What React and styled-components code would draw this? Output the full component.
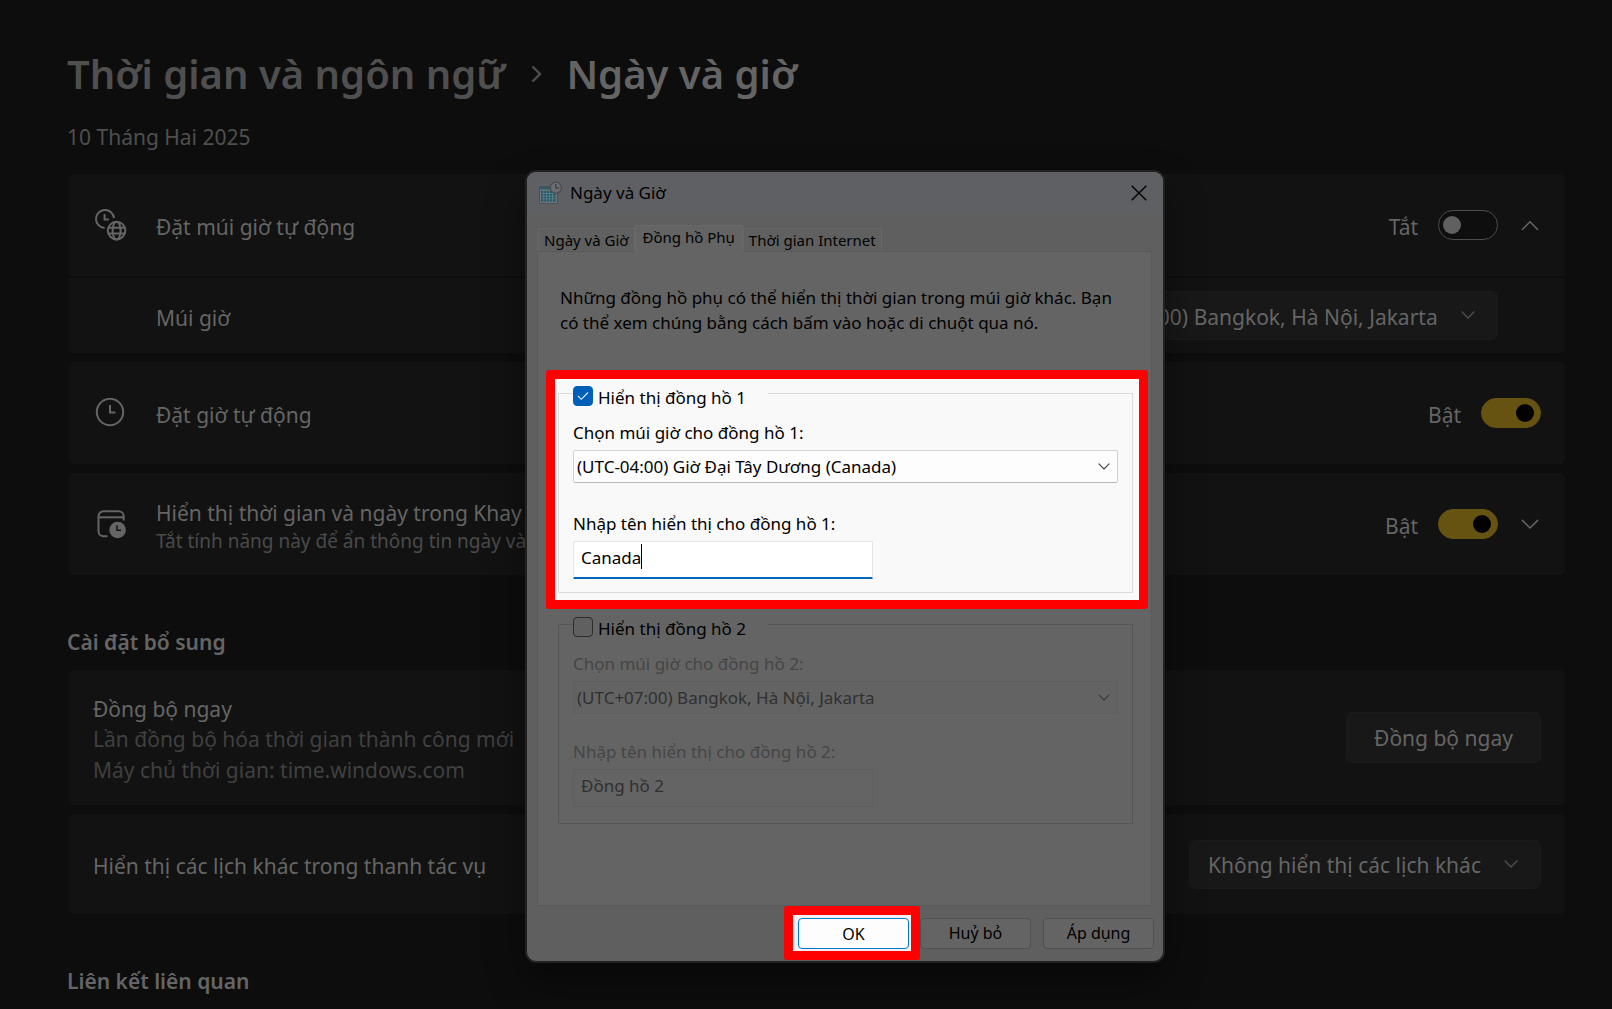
import React from 'react';
import styled, { createGlobalStyle, css } from 'styled-components';

const GlobalStyle = createGlobalStyle`
  *, *::before, *::after { box-sizing: border-box; }
  body {
    margin: 0;
    background: #0d0d0d;
    font-family: "Noto Sans", "Open Sans", sans-serif;
  }
  button, input, select { font: inherit; margin: 0; }
`;

/* ---------- Settings page ---------- */

const Desktop = styled.div`
  position: relative;
  min-height: 100vh;
  overflow: hidden;
`;

const Page = styled.main`
  display: flex;
  flex-direction: column;
  padding: 46px 47px 0 67px;
  color: #656565;
  font-size: 21px;
  line-height: 30px;
  white-space: nowrap;
`;

const Breadcrumb = styled.nav`
  display: flex;
  align-items: center;
  gap: 24px;
  font-size: 40px;
  font-weight: 600;
  line-height: 56px;
`;

const Crumb = styled.a`
  color: #4f4f4f;
  text-decoration: none;
`;

const CurrentCrumb = styled.h1`
  margin: 0;
  font: inherit;
  color: #646464;
`;

const DateLine = styled.p`
  margin: 20px 0 22px;
  color: #4f4f4f;
`;

const CardList = styled.div`
  display: flex;
  flex-direction: column;
  gap: 9px;
  margin-left: 2px;
`;

const Card = styled.section`
  display: flex;
  flex-direction: column;
  gap: 2px;
  border-radius: 5px;
  overflow: hidden;
`;

const Row = styled.div`
  display: flex;
  align-items: center;
  min-height: ${(p) => p.$height}px;
  padding: 0 ${(p) => (p.$nested ? 67 : 24)}px 0 ${(p) => (p.$nested ? 87 : 24)}px;
  background: #121212;
`;

const RowIcon = styled.span`
  display: flex;
  width: 63px;
  padding-left: 2px;
`;

const RowText = styled.div`
  flex: 1;
  padding-top: 4px;
`;

const RowLabel = styled.label`
  display: block;
`;

const RowHint = styled.div`
  color: #4a4a4a;
  font-size: 19px;
  line-height: 26px;
`;

const RowDetail = styled.div`
  color: #404040;
  line-height: 31px;
`;

const Status = styled.span`
  padding-top: 4px;
  margin-right: 20px;
`;

const Toggle = styled.input`
  appearance: none;
  display: flex;
  align-items: center;
  width: 60px;
  height: 30px;
  padding: 0 4px;
  border: 1px solid #4c4c4c;
  border-radius: 15px;
  background: #0e0e0e;

  &::before {
    content: "";
    width: 18px;
    height: 18px;
    border-radius: 50%;
    background: #606060;
  }

  &:checked {
    justify-content: flex-end;
    padding-right: 6px;
    border-color: #665311;
    background: #665311;
  }

  &:checked::before { background: #000; }
`;

const Expander = styled.button`
  display: flex;
  justify-content: center;
  width: 22px;
  margin-left: 21px;
  padding: 0;
  border: 0;
  background: none;
  color: #656565;
`;

const SectionTitle = styled.h2`
  margin: 52px 0 13px;
  font-size: 21px;
  font-weight: 600;
`;

const PushButton = styled.button`
  width: 195px;
  height: 51px;
  border: 1px solid #1b1b1b;
  border-radius: 6px;
  background: #181818;
  color: #656565;
`;

const PickerBox = styled.div`
  display: grid;
  align-items: center;

  & > * { grid-area: 1 / 1; }
  & > svg { justify-self: end; margin-right: ${(p) => p.$inset}px; pointer-events: none; }
`;

const PagePicker = styled.select`
  appearance: none;
  height: 49px;
  padding: 2px 59px 0 18px;
  border: 1px solid #1b1b1b;
  border-radius: 6px;
  background: #181818;
  color: #656565;
`;

/* ---------- Date and Time window ---------- */

const Window = styled.section`
  position: absolute;
  top: 172px;
  left: calc(50% - 279px);
  width: 636px;
  border-radius: 9px;
  overflow: hidden;
  background: #5f5f5f;
  box-shadow: 0 0 0 2px #212121, 0 18px 40px rgba(0, 0, 0, 0.45);
  color: #000;
  font-size: 17px;
  line-height: 24px;
`;

const TitleBar = styled.header`
  display: flex;
  align-items: center;
  height: 42px;
  padding: 0 16px 0 11px;
  background: #5e6063;
`;

const WindowTitle = styled.h2`
  flex: 1;
  margin: 0 0 0 7px;
  font: inherit;
`;

const CloseButton = styled.button`
  display: flex;
  padding: 0;
  border: 0;
  background: none;
  color: #000;
`;

const Tabs = styled.div`
  display: flex;
  align-items: flex-end;
  padding: 11px 11px 0;
`;

const Tab = styled.button`
  height: 23px;
  padding: 0 5px;
  border: 1px solid #676767;
  border-bottom: 0;
  background: #606060;
  color: #000;
  font-size: 15px;
  line-height: 22px;
  white-space: nowrap;

  ${(p) => p.$active && css`
    z-index: 1;
    height: 27px;
    margin-bottom: -1px;
    padding: 0 7px 4px;
    border-color: #686868;
    background: #646464;
  `}
`;

const TabPanel = styled.div`
  margin: 0 11px 0 10px;
  padding: 33px 3px 65px 8px;
  border: 1px solid #5a5a5a;
  background: #646464;
`;

const Intro = styled.p`
  margin: 0 0 35px 14px;
  line-height: 25px;
  white-space: nowrap;
`;

const Frame = styled.div`
  padding: 1px 6px 7px 3px;
  border: 9px solid transparent;
  border-radius: 3px;

  ${(p) => p.$marked && css`
    border-color: #fe0000;
    background: #f9f9f9;
  `}

  & + & { margin-top: -8px; }
`;

const ClockGroup = styled.fieldset`
  min-width: 0;
  margin: 0;
  padding: 0 14px ${(p) => (p.disabled ? 16 : 13)}px;
  border: 1px solid ${(p) => (p.disabled ? '#565656' : '#dcdcdc')};
`;

const Legend = styled.legend`
  width: 195px;
  padding: 6px 0 0;
`;

const CheckLabel = styled.label`
  display: flex;
  align-items: flex-start;
  gap: 5px;
  height: 20px;
  color: #000;
`;

const CheckArea = styled.span`
  display: grid;
  place-items: center;

  & > * { grid-area: 1 / 1; }
  & > svg { pointer-events: none; }
`;

const CheckBox = styled.input`
  appearance: none;
  width: 20px;
  height: 20px;
  border: 1px solid #2c2c2c;
  border-radius: 4px;
  background: #606060;

  &:checked {
    border-color: #005fb8;
    background: #005fb8;
  }
`;

const FieldLabel = styled.label`
  display: block;
  margin: ${(p) => p.$before}px 0 5px;
  color: ${(p) => (p.$dim ? '#464646' : '#000')};
`;

const ZoneSelect = styled.select`
  appearance: none;
  width: 100%;
  height: 33px;
  padding: 1px 32px 0 3px;
  border: 1px solid #d2d2d2;
  border-bottom-color: #b9b9b9;
  border-radius: 2px;
  background: #fdfdfd;
  color: #000;
  opacity: 1;

  &:disabled {
    border-color: #5f5f5f;
    background: #636363;
    color: #303030;
  }
`;

const NameField = styled.div`
  display: flex;
  width: 300px;
  height: 38px;
  padding: 2px 7px 0;
  border: 1px solid ${(p) => (p.$dim ? '#5f5f5f' : '#e2e6ea')};
  border-bottom: ${(p) => (p.$dim ? '1px solid #5f5f5f' : '2px solid #0067c0')};
  border-radius: 1px;
  background: ${(p) => (p.$dim ? '#646464' : '#fff')};
`;

const NameInput = styled.input`
  field-sizing: content;
  height: 26px;
  padding: 0;
  border: 0;
  outline: 0;
  background: none;
  color: #000;

  &:disabled { color: #303030; }
`;

const Caret = styled.span`
  width: 1px;
  height: 25px;
  background: #000;
`;

const Footer = styled.footer`
  display: flex;
  align-items: center;
  justify-content: flex-end;
  gap: 12px;
  height: 55px;
  padding: 0 9px 1px 0;
`;

const ButtonMark = styled.div`
  margin-right: -12px;
  padding: 3px 2px 2px 5px;
  border: 9px solid #fe0000;
  border-radius: 3px;
  background: #f1f1f1;
`;

const WindowButton = styled.button`
  display: block;
  width: 111px;
  height: 31px;
  padding: 0;
  border: 1px solid ${(p) => (p.$primary ? '#0078d4' : '#505050')};
  border-radius: 4px;
  background: ${(p) => (p.$primary ? '#fdfdfd' : '#646464')};
  color: #000;
  font-size: 16px;
  line-height: 28px;
`;

/* ---------- Icons ---------- */

const Chevron = ({ width = 16, dir = 'down', stroke = 'currentColor', weight = 1.5 }) => (
  <svg width={width} height={width * 0.6} viewBox="0 0 20 12" fill="none" stroke={stroke}
    strokeWidth={(weight * 20) / width} strokeLinecap="round" strokeLinejoin="round" aria-hidden="true">
    <path d={dir === 'down' ? 'M1.5 1.5 10 10l8.5-8.5' : 'M1.5 10.5 10 2l8.5 8.5'} />
  </svg>
);

const CrumbArrow = () => (
  <svg width="13" height="20" viewBox="0 0 13 20" fill="none" stroke="#4f4f4f" strokeWidth="2.4" aria-hidden="true">
    <path d="M3.500 2.500l7.500 7.500-7.500 7.500" />
  </svg>
);

const ClockGlobeIcon = () => (
  <svg width="32" height="32" viewBox="0 0 32 32" fill="none" stroke="#656565" strokeWidth="2" aria-hidden="true">
    <path d="M9.600 18.900A9 9 0 1 1 19 9.200" />
    <path d="M9.600 5v5.600h4.200" />
    <circle cx="21.600" cy="21.600" r="8.800" />
    <ellipse cx="21.600" cy="21.600" rx="4" ry="8.800" />
    <path d="M13.500 18.700h16.200M13.500 24.500h16.200" />
  </svg>
);

const ClockIcon = () => (
  <svg width="30" height="30" viewBox="0 0 30 30" fill="none" stroke="#656565" strokeWidth="2" aria-hidden="true">
    <circle cx="15" cy="14" r="13.200" />
    <path d="M15 7v7.500h5.500" />
  </svg>
);

const CalendarClockIcon = () => (
  <svg width="32" height="32" viewBox="0 0 32 32" fill="none" stroke="#656565" strokeWidth="2" aria-hidden="true">
    <path d="M12.500 28.200H8.500a5 5 0 0 1-5-5V8.300a5 5 0 0 1 5-5h15.200a5 5 0 0 1 5 5v4.200" />
    <path d="M3.500 9.300h25" />
    <circle cx="22.600" cy="22" r="8.300" fill="#656565" stroke="none" />
    <path d="M22 17.500v4.700h4" stroke="#121212" strokeWidth="1.500" />
  </svg>
);

const DateTimeIcon = () => (
  <svg width="25" height="24" viewBox="0 0 25 24" aria-hidden="true">
    <path d="M1.500 5.500h18v17h-18z" fill="#6d757a" stroke="#4a5256" />
    <path d="M2 6h17v2.500H2z" fill="#315c6a" />
    <path d="M3 10h14.500v10.500H3z" fill="#1f5868" />
    <path d="M3 12.500h14.500M3 15.200h14.500M3 17.900h14.500M5.800 10v10.500M8.700 10v10.500M11.600 10v10.500M14.500 10v10.500" stroke="#71868d" strokeWidth=".7" />
    <circle cx="17.800" cy="6.800" r="5.600" fill="#6b6d70" stroke="#464b50" strokeWidth="1.200" />
    <path d="M17.800 3v4h3.200" fill="none" stroke="#2d3135" />
  </svg>
);

const CloseIcon = () => (
  <svg width="16" height="16" viewBox="0 0 16 16" stroke="currentColor" strokeWidth="1.400" aria-hidden="true">
    <path d="M.7.7l14.600 14.600M15.300.7.7 15.300" />
  </svg>
);

const CheckIcon = () => (
  <svg width="12" height="10" viewBox="0 0 12 10" fill="none" stroke="#e6f0fa" strokeWidth="1.100" aria-hidden="true">
    <path d="M1 5l3.300 3.300L11 1.500" />
  </svg>
);

/* ---------- Composition ---------- */

function Clock({ index, enabled, zone, name, gap }) {
  return (
    <Frame $marked={enabled}>
      <ClockGroup disabled={!enabled}>
        <Legend>
          <CheckLabel>
            <CheckArea>
              <CheckBox type="checkbox" defaultChecked={enabled} />
              {enabled && <CheckIcon />}
            </CheckArea>
            Hiển thị đồng hồ {index}
          </CheckLabel>
        </Legend>
        <FieldLabel htmlFor={`zone-${index}`} $before={15} $dim={!enabled}>
          Chọn múi giờ cho đồng hồ {index}:
        </FieldLabel>
        <PickerBox $inset={8}>
          <ZoneSelect id={`zone-${index}`}>
            <option>{zone}</option>
          </ZoneSelect>
          <Chevron width={12} weight={1.1} stroke={enabled ? '#444' : '#3c3c3c'} />
        </PickerBox>
        <FieldLabel htmlFor={`name-${index}`} $before={gap} $dim={!enabled}>
          Nhập tên hiển thị cho đồng hồ {index}:
        </FieldLabel>
        <NameField $dim={!enabled}>
          <NameInput id={`name-${index}`} type="text" defaultValue={name} />
          {enabled && <Caret />}
        </NameField>
      </ClockGroup>
    </Frame>
  );
}

export default function App() {
  return (
    <Desktop>
      <GlobalStyle />
      <Page>
        <Breadcrumb>
          <Crumb href="#language">Thời gian và ngôn ngữ</Crumb>
          <CrumbArrow />
          <CurrentCrumb>Ngày và giờ</CurrentCrumb>
        </Breadcrumb>
        <DateLine>10 Tháng Hai 2025</DateLine>

        <CardList>
          <Card>
            <Row $height={102}>
              <RowIcon><ClockGlobeIcon /></RowIcon>
              <RowText><RowLabel htmlFor="auto-zone">Đặt múi giờ tự động</RowLabel></RowText>
              <Status>Tắt</Status>
              <Toggle id="auto-zone" type="checkbox" role="switch" />
              <Expander aria-label="Thu gọn"><Chevron width={18} dir="up" /></Expander>
            </Row>
            <Row $height={75} $nested>
              <RowText><RowLabel htmlFor="time-zone">Múi giờ</RowLabel></RowText>
              <PickerBox $inset={23}>
                <PagePicker id="time-zone">
                  <option>(UTC+07:00) Bangkok, Hà Nội, Jakarta</option>
                </PagePicker>
                <Chevron width={14} stroke="#4c4c4c" />
              </PickerBox>
            </Row>
          </Card>
          <Card>
            <Row $height={102}>
              <RowIcon><ClockIcon /></RowIcon>
              <RowText><RowLabel htmlFor="auto-time">Đặt giờ tự động</RowLabel></RowText>
              <Status>Bật</Status>
              <Toggle id="auto-time" type="checkbox" role="switch" defaultChecked />
            </Row>
          </Card>
          <Card>
            <Row $height={102}>
              <RowIcon><CalendarClockIcon /></RowIcon>
              <RowText>
                <RowLabel htmlFor="tray-time">Hiển thị thời gian và ngày trong Khay</RowLabel>
                <RowHint>Tắt tính năng này để ẩn thông tin ngày và</RowHint>
              </RowText>
              <Status>Bật</Status>
              <Toggle id="tray-time" type="checkbox" role="switch" defaultChecked />
              <Expander aria-label="Mở rộng"><Chevron width={18} /></Expander>
            </Row>
          </Card>
        </CardList>

        <SectionTitle>Cài đặt bổ sung</SectionTitle>
        <CardList>
          <Card>
            <Row $height={135}>
              <RowText>
                <RowLabel as="div">Đồng bộ ngay</RowLabel>
                <RowDetail>Lần đồng bộ hóa thời gian thành công mới</RowDetail>
                <RowDetail>Máy chủ thời gian: time.windows.com</RowDetail>
              </RowText>
              <PushButton>Đồng bộ ngay</PushButton>
            </Row>
          </Card>
          <Card>
            <Row $height={100}>
              <RowText>
                <RowLabel htmlFor="calendars">Hiển thị các lịch khác trong thanh tác vụ</RowLabel>
              </RowText>
              <PickerBox $inset={23}>
                <PagePicker id="calendars">
                  <option>Không hiển thị các lịch khác</option>
                </PagePicker>
                <Chevron width={14} stroke="#4c4c4c" />
              </PickerBox>
            </Row>
          </Card>
        </CardList>

        <SectionTitle>Liên kết liên quan</SectionTitle>
      </Page>

      <Window role="dialog" aria-labelledby="window-title">
        <TitleBar>
          <DateTimeIcon />
          <WindowTitle id="window-title">Ngày và Giờ</WindowTitle>
          <CloseButton aria-label="Đóng"><CloseIcon /></CloseButton>
        </TitleBar>
        <Tabs role="tablist">
          <Tab role="tab">Ngày và Giờ</Tab>
          <Tab role="tab" aria-selected="true" $active>Đồng hồ Phụ</Tab>
          <Tab role="tab">Thời gian Internet</Tab>
        </Tabs>
        <TabPanel role="tabpanel">
          <Intro>
            Những đồng hồ phụ có thể hiển thị thời gian trong múi giờ khác. Bạn<br />
            có thể xem chúng bằng cách bấm vào hoặc di chuột qua nó.
          </Intro>
          <Clock index={1} enabled zone="(UTC-04:00) Giờ Đại Tây Dương (Canada)" name="Canada" gap={29} />
          <Clock index={2} enabled={false} zone="(UTC+07:00) Bangkok, Hà Nội, Jakarta" name="Đồng hồ 2" gap={26} />
        </TabPanel>
        <Footer>
          <ButtonMark><WindowButton $primary>OK</WindowButton></ButtonMark>
          <WindowButton>Huỷ bỏ</WindowButton>
          <WindowButton>Áp dụng</WindowButton>
        </Footer>
      </Window>
    </Desktop>
  );
}
